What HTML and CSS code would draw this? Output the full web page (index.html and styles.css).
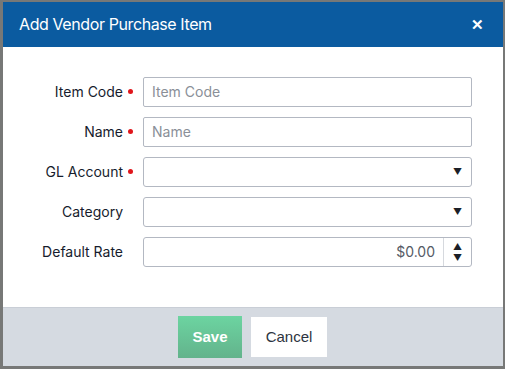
FILE: index.html
```html
<!DOCTYPE html>
<html lang="en">
<head>
    <meta charset="UTF-8">
    <meta name="viewport" content="width=device-width, initial-scale=1.0">
    <title>Add Vendor Purchase Item</title>
    <link rel="stylesheet" href="styles.css">
</head>
<body>
<div class="modal">
    <div class="modal-header">
        <div class="modal-title">Add Vendor Purchase Item</div>
        <div class="close">&#x2715;</div>
    </div>
    <form class="modal-body">
        <label class="field-label required">Item Code</label>
        <input class="field" type="text" placeholder="Item Code">

        <label class="field-label required">Name</label>
        <input class="field" type="text" placeholder="Name">

        <label class="field-label required">GL Account</label>
        <div class="field select"><span class="caret">&#9660;</span></div>

        <label class="field-label">Category</label>
        <div class="field select"><span class="caret">&#9660;</span></div>

        <label class="field-label">Default Rate</label>
        <div class="field number">
            <span class="value">$0.00</span>
            <span class="spinner"><span>&#9650;</span><span>&#9660;</span></span>
        </div>
    </form>
    <div class="modal-footer">
        <button class="btn btn-save" type="button">Save</button>
        <button class="btn btn-cancel" type="button">Cancel</button>
    </div>
</div>
</body>
</html>
```

FILE: styles.css
```css
body {
    margin: 0;
    background-color: #777877;
    font-family: Inter, "Noto Sans", sans-serif;
}

.modal {
    margin: 2px 2px 3px 3px;
    width: 500px;
    height: 364px;
    background-color: white;
    display: flex;
    flex-direction: column;
}

.modal-header {
    height: 45px;
    background-color: #0b5ba0;
    color: white;
    display: flex;
    align-items: center;
    justify-content: space-between;
    padding: 0 19px 0 16px;
}

.modal-title {
    font-size: 16px;
    letter-spacing: -0.4px;
}

.close {
    font-size: 15px;
    font-weight: bold;
}

/* form rows */
.modal-body {
    flex: 1;
    margin: 0;
    padding: 30px 31px 40px 0;
    display: grid;
    grid-template-columns: 130px 1fr;
    grid-auto-rows: 30px;
    column-gap: 10px;
    row-gap: 10px;
}

.field-label {
    display: flex;
    align-items: center;
    justify-content: flex-end;
    font-size: 14px;
    color: #161c2d;
    padding-right: 10px;
}

.field-label.required::after {
    content: "";
    width: 5px;
    height: 5px;
    border-radius: 50%;
    background-color: #e0161b;
    margin-left: 5px;
    margin-right: -10px;
}

.field {
    box-sizing: border-box;
    height: 30px;
    border: 1px solid #b3b8c2;
    border-radius: 2px;
    background-color: white;
    padding: 0 8px;
    font-family: Inter, "Noto Sans", sans-serif;
    font-size: 14px;
    color: #333;
    outline: none;
}

.field::placeholder {
    color: #8a8f98;
}

.select {
    display: flex;
    align-items: center;
    justify-content: flex-end;
    border-radius: 3px;
    padding-right: 9px;
}

.caret {
    font-size: 9px;
    color: #1b1f27;
}

.number {
    display: flex;
    align-items: center;
    justify-content: flex-end;
    border-radius: 3px;
    padding: 0;
}

.number .value {
    color: #555a66;
    padding-right: 8px;
}

.spinner {
    height: 100%;
    width: 27px;
    border-left: 1px solid #d6d9de;
    display: flex;
    flex-direction: column;
    align-items: center;
    justify-content: center;
    font-size: 9px;
    line-height: 11px;
    color: #1b1f27;
}

.modal-footer {
    height: 59px;
    border-top: 1px solid #c9ced6;
    background-color: #d5dae1;
    display: flex;
    align-items: center;
    justify-content: center;
    gap: 9px;
}

.btn {
    border: none;
    font-family: "Liberation Sans", Arial, sans-serif;
    font-size: 15px;
    cursor: pointer;
}

.btn-save {
    width: 64px;
    height: 42px;
    margin-left: -1px;
    color: white;
    font-weight: bold;
    background: linear-gradient(#6cd4a1, #63b38c);
}

.btn-cancel {
    width: 76px;
    height: 40px;
    color: #2d3440;
    background-color: white;
}
```
